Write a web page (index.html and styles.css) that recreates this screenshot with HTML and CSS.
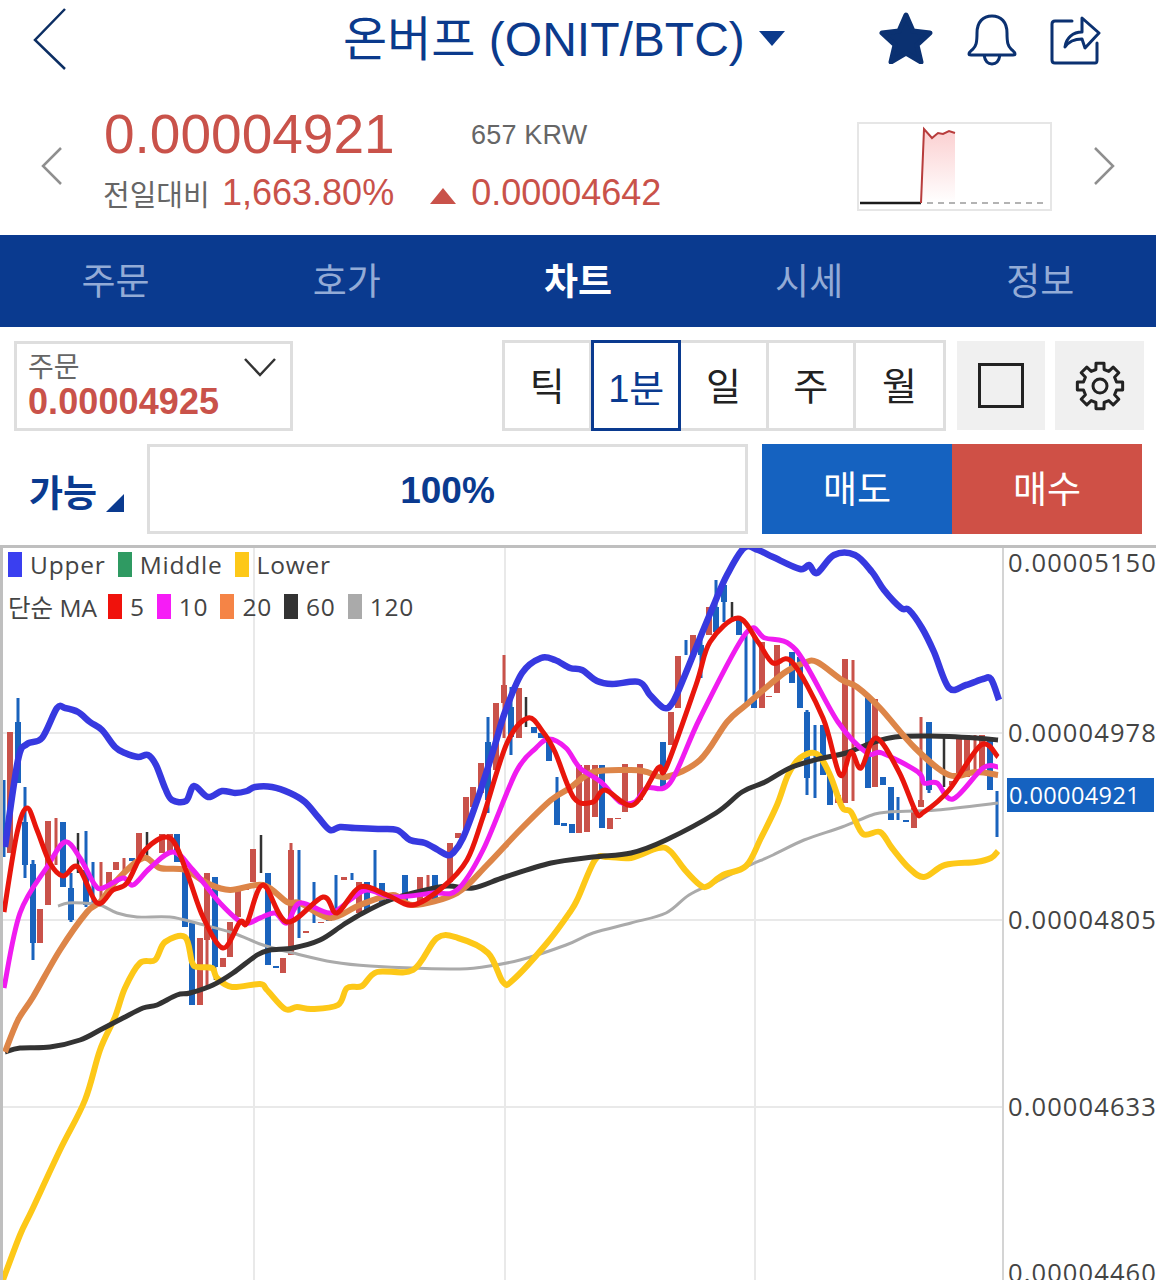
FILE: index.html
```html
<!DOCTYPE html>
<html lang="ko">
<head>
    <meta charset="UTF-8">
    <meta name="viewport" content="width=device-width, initial-scale=1.0">
    <title>온버프 (ONIT/BTC)</title>
    <link rel="stylesheet" href="styles.css">
</head>
<body>
    <header class="topbar">
        <svg class="back" viewBox="0 0 36 64"><path d="M33 2 3 33l30 29"/></svg>
        <div class="title">온버프 (ONIT/BTC)<span class="title-caret"></span></div>
        <div class="top-icons">
            <svg class="icon-star" viewBox="0 0 54 52"><path d="M27 3l7 16 17 2-13 12 4 17-15-9-15 9 4-17L3 21l17-2z"/></svg>
            <svg class="icon-bell" viewBox="0 0 50 52"><path d="M2 40c0-2 2-3 4-5 3-3 4-6 4-16C10 8 16 2 25 2s15 6 15 17c0 10 1 13 4 16 2 2 4 3 4 5 0 1-1 1-2 1H4c-1 0-2 0-2-1zM17 41c1 6 4 9 8 9s7-3 8-9"/></svg>
            <svg class="icon-share" viewBox="0 0 52 50"><path d="M23 6H6c-2 0-3 1-3 3v36c0 2 1 3 3 3h40c2 0 2-1 2-3V28"/><path d="M16 32c1-9 8-15 17-15V3l17 15-14 15-3-9c-7 0-13 2-17 8z"/></svg>
        </div>
    </header>

    <section class="price-row">
        <svg class="side-arrow" viewBox="0 0 22 38"><path d="M20 1 2 19l18 18"/></svg>
        <div class="price-info">
            <div class="price-main">
                <span class="price">0.00004921</span>
                <span class="krw">657 KRW</span>
            </div>
            <div class="price-sub">
                <span class="sub-label">전일대비</span>
                <span class="sub-num">1,663.80%</span>
                <span class="up-mark"></span>
                <span class="sub-num">0.00004642</span>
            </div>
        </div>
        <svg class="spark" viewBox="0 0 191 85">
            <defs>
                <linearGradient id="sparkFill" x1="0" y1="0" x2="0" y2="1">
                    <stop offset="0" stop-color="#fbcfd0"/>
                    <stop offset="1" stop-color="#ffffff"/>
                </linearGradient>
            </defs>
            <path d="M62 79 65 5l8 9 6-5 5 1 6-3 6 2v70z" fill="url(#sparkFill)"/>
            <path class="spark-flat" d="M1 79h61"/>
            <path class="spark-up" d="M62 79 65 5l8 9 6-5 5 1 6-3 6 2"/>
            <path class="spark-dash" d="M68 79h118"/>
        </svg>
        <svg class="side-arrow" viewBox="0 0 22 38"><path d="M2 1l18 18L2 37"/></svg>
    </section>

    <nav class="tabs">
        <a class="tab">주문</a>
        <a class="tab">호가</a>
        <a class="tab active">차트</a>
        <a class="tab">시세</a>
        <a class="tab">정보</a>
    </nav>

    <section class="tools">
        <div class="order-select">
            <div class="order-label">주문</div>
            <div class="order-value">0.00004925</div>
            <svg class="order-chevron" viewBox="0 0 32 20"><path d="M1 2l15 16L31 2"/></svg>
        </div>
        <div class="periods">
            <div class="period">틱</div>
            <div class="period selected">1분</div>
            <div class="period">일</div>
            <div class="period">주</div>
            <div class="period last">월</div>
        </div>
        <div class="square-btn"><span class="square-icon"></span></div>
        <div class="square-btn gear-btn">
            <svg class="gear" viewBox="-25 -25 50 50">
                <path d="M-4.1-16.5-4-22.65 4-22.65 4.1-16.5 8.76-14.57 13.19-18.84 18.84-13.19 14.57-8.76 16.5-4.1 22.65-4 22.65 4 16.5 4.1 14.57 8.76 18.84 13.19 13.19 18.84 8.76 14.57 4.1 16.5 4 22.65-4 22.65-4.1 16.5-8.76 14.57-13.19 18.84-18.84 13.19-14.57 8.76-16.5 4.1-22.65 4-22.65-4-16.5-4.1-14.57-8.76-18.84-13.19-13.19-18.84-8.76-14.57z"/>
                <circle r="7"/>
            </svg>
        </div>
    </section>

    <section class="trade">
        <div class="avail">가능<span class="avail-mark"></span></div>
        <div class="percent">100%</div>
        <div class="trade-btn sell">매도</div>
        <div class="trade-btn buy">매수</div>
    </section>

    <section class="chart">
        <svg class="plot" viewBox="0 545 1156 735">
            <path class="grid" d="M254 548V1280M505 548V1280M755 548V1280M3 733H1003M3 920H1003M3 1107H1003"/>
            <path class="axis" d="M1003 548V1280"/>

            <path class="wick-blue" d="M18 698V783M4 780V857M25 787V878M33 860V960M71 873V922M86 831V907M93 862V907M299 850V938M314 882V923M336 875V918M352 873V880M375 850V892M488 717V813M511 687V755M557 777V825M686 640V655M701 638V678M716 580V632M724 585V622M746 633V707M754 635V695M807 710V795M815 725V798M898 797V820M929 722V793M944 738V738M997 791V837"/>
            <path class="wick-red" d="M56 818V865M101 862V907M124 858V872M207 873V987M291 843V955M428 875V903M504 655V738M853 660V801M921 717V807M975 735V772"/>
            <path class="wick-black" d="M78 833V873M147 832V858M215 940V980M261 835V873M526 697V727M732 602V618M944 738V787"/>
            <path class="body-blue" d="M18 722V783M25 822V865M33 864V943M63 822V887M71 888V920M86 870V905M132 858V861M177 834V862M185 870V927M192 923V1005M215 877V967M268 873V965M276 966V968M329 919V921M367 882V912M382 883V905M405 875V905M435 875V902M488 742V800M511 707V737M534 727V733M541 733V738M549 742V761M557 795V825M564 823V826M572 824V833M602 765V828M663 742V788M701 645V655M716 607V632M724 585V602M739 618V635M754 699V708M792 652V683M800 657V708M807 712V778M823 725V775M830 775V805M868 695V788M883 777V785M891 787V820M906 820V822M929 722V790M990 737V790"/>
            <path class="body-red" d="M10 732V853M40 909V943M48 821V905M109 872V893M116 862V870M139 833V860M162 834V853M170 834V853M200 938V1005M207 873V940M223 958V967M230 922V957M238 890V917M246 887V890M253 849V882M283 958V973M291 850V955M306 931V933M321 922V923M344 877V880M359 882V913M420 877V903M450 843V882M458 833V838M466 797V830M473 787V807M481 763V793M496 703V770M504 685V703M519 688V738M579 765V833M587 765V832M595 765V817M610 818V829M618 818V819M625 764V812M640 764V800M671 712V745M678 656V708M693 635V655M709 607V635M762 642V708M769 696V697M777 645V693M838 795V803M845 659V803M875 699V787M914 808V828M921 800V807M952 781V785M959 735V777M967 735V777M982 735V772"/>

            <polyline class="line-gray" points="58,906 68,903 83,903 100,905 117,913 137,917 170,917 200,924 233,933 263,945 293,953 333,962 370,966 450,969 483,967 520,960 566,945 593,933 631,923 666,913 689,895 716,882 746,867 773,855 804,840 842,827 872,815 888,812 937,810 998,803"/>
            <polyline class="line-upper" points="5,847 18,760 27,744 42,738 57,708 65,708 78,712 90,722 102,730 115,747 125,753 138,757 148,755 156,765 165,788 172,800 186,801 194,786 208,797 222,791 235,793 247,791 255,787 272,787 290,793 305,802 318,817 330,830 340,827 355,828 378,829 397,830 410,840 425,843 438,850 447,855 453,853 463,838 478,798 494,748 505,712 522,673 541,658 555,660 570,668 582,670 597,681 612,684 639,682 650,695 664,708 673,702 685,675 700,638 715,602 727,575 744,548 758,550 773,557 800,569 809,565 817,573 834,555 855,555 872,572 884,590 901,608 909,610 922,628 934,652 949,688 966,685 983,679 991,679 999,700"/>
            <polyline class="line-lower" points="3,1280 20,1235 32,1210 60,1150 85,1100 100,1050 115,1017 125,988 140,963 155,960 165,942 185,937 192,962 197,967 212,968 217,978 232,987 260,984 267,990 285,1009 297,1007 312,1009 338,1005 347,988 362,986 377,972 413,970 437,938 458,938 488,953 503,982 513,980 547,943 570,912 578,898 595,860 608,857 631,858 658,848 670,851 685,870 700,885 708,886 723,875 746,866 761,838 777,805 788,775 800,758 817,754 830,775 842,807 851,812 863,834 880,832 892,848 909,868 924,877 945,865 976,862 991,858 998,851"/>
            <polyline class="line-black" points="5,1052 20,1048 50,1047 80,1040 100,1030 123,1018 143,1008 157,1005 177,995 190,993 213,985 233,973 257,955 270,950 293,948 320,940 343,925 363,913 390,900 417,892 447,886 473,888 505,877 551,863 593,857 631,853 666,840 716,813 742,792 765,782 792,767 823,758 846,753 872,743 895,737 930,736 976,738 998,740"/>
            <polyline class="line-orange" points="5,1052 18,1020 33,997 60,950 87,912 100,902 117,880 143,858 160,868 185,870 207,883 230,890 263,885 287,902 300,903 330,918 360,905 393,895 413,905 457,893 487,865 520,830 551,800 570,788 593,772 631,770 647,772 666,777 700,760 727,722 746,705 784,673 804,663 817,662 842,680 857,687 880,708 915,748 949,775 976,772 998,775"/>
            <polyline class="line-magenta" points="4,988 20,913 47,867 65,842 80,858 95,885 103,888 123,878 133,885 150,868 173,852 193,870 220,903 243,923 260,918 275,913 287,923 300,903 330,913 350,900 367,890 393,897 433,893 457,890 483,850 516,772 536,748 549,739 566,748 580,768 601,782 620,802 635,802 647,788 670,783 700,718 746,633 765,638 796,650 838,722 867,753 882,753 918,772 924,783 937,783 953,799 983,768 998,767"/>
            <polyline class="line-red" points="4,912 17,833 27,808 37,830 50,863 63,876 78,867 97,903 113,890 127,883 145,850 170,838 187,873 203,917 223,948 240,922 247,923 263,885 287,922 323,897 337,913 360,887 387,895 413,905 443,887 467,860 483,817 507,743 528,718 543,732 555,752 574,798 593,802 605,790 633,805 658,768 666,768 696,685 710,642 738,618 758,642 773,663 792,662 823,718 840,775 851,752 861,768 876,738 899,772 916,812 924,812 949,790 981,745 998,757"/>
        </svg>

        <div class="legend">
            <div class="legend-row">
                <span class="swatch c-upper"></span><span class="legend-text">Upper</span>
                <span class="swatch c-middle"></span><span class="legend-text">Middle</span>
                <span class="swatch c-lower"></span><span class="legend-text">Lower</span>
            </div>
            <div class="legend-row">
                <span class="legend-text ma-label">단순 MA</span>
                <span class="swatch c-red"></span><span class="legend-text">5</span>
                <span class="swatch c-magenta"></span><span class="legend-text">10</span>
                <span class="swatch c-orange"></span><span class="legend-text">20</span>
                <span class="swatch c-black"></span><span class="legend-text">60</span>
                <span class="swatch c-gray"></span><span class="legend-text">120</span>
            </div>
        </div>

        <div class="y-label y1">0.00005150</div>
        <div class="y-label y2">0.00004978</div>
        <div class="y-label y3">0.00004805</div>
        <div class="y-label y4">0.00004633</div>
        <div class="y-label y5">0.00004460</div>
        <div class="y-label y-now">0.00004921</div>
    </section>

    <script src="chart.js"></script>
</body>
</html>
```

FILE: styles.css
```css
html, body {
    margin: 0;
    padding: 0;
    background: #fff;
}

body {
    width: 1156px;
    height: 1280px;
    overflow: hidden;
    font-family: "Liberation Sans", "Noto Sans CJK KR", sans-serif;
    color: #222;
}

/* top bar */
.topbar {
    height: 80px;
    display: flex;
    align-items: center;
    position: relative;
}

.back {
    width: 36px;
    height: 64px;
    margin: -2px 0 0 32px;
    fill: none;
    stroke: #0c2e63;
    stroke-width: 2.5;
}

.title {
    width: 470px;
    margin-left: 275px;
    font-size: 48px;
    line-height: 80px;
    color: #0b3a8c;
    white-space: nowrap;
}

.title-caret {
    display: inline-block;
    width: 0;
    height: 0;
    margin: 0 0 10px 14px;
    border-left: 13px solid transparent;
    border-right: 13px solid transparent;
    border-top: 15px solid #0b3a8c;
}

.top-icons {
    display: flex;
    align-items: center;
    margin-left: 66px;
}

.top-icons svg {
    fill: none;
    stroke: #0b3171;
    stroke-width: 3;
    stroke-linejoin: round;
    stroke-linecap: round;
}

.icon-star {
    width: 54px;
    height: 52px;
    margin-top: -4px;
}

.top-icons .icon-star {
    fill: #0b3171;
    stroke-width: 5;
}

.icon-bell {
    width: 50px;
    height: 52px;
    margin: 0 0 0 34px;
}

.icon-share {
    width: 52px;
    height: 50px;
    margin: 0 0 0 32px;
}

/* price */
.price-row {
    height: 155px;
    display: flex;
    align-items: flex-start;
    position: relative;
}

.side-arrow {
    width: 22px;
    height: 38px;
    margin: 67px 0 0 41px;
    fill: none;
    stroke: #8f8f8f;
    stroke-width: 2.5;
}

.side-arrow:last-child {
    margin-left: 41px;
}

.price-info {
    width: 753px;
    margin-left: 41px;
}

.price-main {
    display: flex;
    align-items: baseline;
    height: 72px;
    padding-top: 22px;
    box-sizing: border-box;
}

.price {
    font-size: 55px;
    line-height: 64px;
    color: #c9524a;
    width: 367px;
}

.krw {
    font-size: 27px;
    letter-spacing: 0.2px;
    color: #666;
    position: relative;
    top: -9px;
}

.price-sub {
    display: flex;
    align-items: center;
    height: 42px;
    margin-top: 20px;
}

.sub-label {
    font-size: 29px;
    color: #666;
    width: 118px;
    margin-left: -1px;
    margin-right: 1px;
}

.sub-num {
    font-size: 36px;
    color: #c9524a;
}

.up-mark {
    width: 0;
    height: 0;
    margin: 6px 15px 0 36px;
    border-left: 13px solid transparent;
    border-right: 13px solid transparent;
    border-bottom: 16px solid #c9524a;
}

.spark {
    width: 195px;
    height: 89px;
    margin-top: 42px;
    border: 2px solid #e6e6e6;
    box-sizing: border-box;
    flex: none;
}

.spark-flat {
    fill: none;
    stroke: #1b1b1b;
    stroke-width: 2.5;
}

.spark-up {
    fill: none;
    stroke: #b83c3c;
    stroke-width: 2;
}

.spark-dash {
    fill: none;
    stroke: #9a9a9a;
    stroke-width: 1.5;
    stroke-dasharray: 6 5;
}

/* tabs */
.tabs {
    height: 92px;
    display: flex;
    background: #0a3a8f;
}

.tab {
    width: 231.2px;
    line-height: 96px;
    text-align: center;
    font-size: 37px;
    color: #93abd6;
}

.tab.active {
    color: #fff;
    font-weight: bold;
}

/* tool row */
.tools {
    display: flex;
    align-items: flex-start;
    height: 117px;
    padding: 13px 0 0 14px;
    box-sizing: border-box;
}

.order-select {
    width: 279px;
    height: 90px;
    margin-top: 1px;
    border: 3px solid #dedede;
    box-sizing: border-box;
    padding: 7px 0 0 11px;
    position: relative;
}

.order-label {
    font-size: 28px;
    line-height: 34px;
    color: #666;
}

.order-value {
    font-size: 36px;
    line-height: 34px;
    font-weight: bold;
    color: #c9524a;
    letter-spacing: 0.1px;
}

.order-chevron {
    position: absolute;
    top: 13px;
    right: 14px;
    width: 32px;
    height: 20px;
    fill: none;
    stroke: #333;
    stroke-width: 2.5;
}

.periods {
    display: flex;
    margin-left: 209px;
    height: 91px;
    border: 3px solid #dedede;
    box-sizing: border-box;
    width: 444px;
}

.period {
    width: 87.5px;
    line-height: 88px;
    text-align: center;
    font-size: 38px;
    color: #222;
    border-right: 3px solid #dedede;
    box-sizing: border-box;
}

.period.last {
    border-right: 0;
}

.period.selected {
    width: 90px;
    height: 91px;
    margin: -3px 0 -3px -1px;
    line-height: 92px;
    border: 3px solid #0a3a8f;
    color: #0a3a8f;
    flex: none;
    position: relative;
}

.square-btn {
    width: 88px;
    height: 89px;
    margin: 1px 0 0 11px;
    background: #f0f0f0;
    display: flex;
    align-items: center;
    justify-content: center;
}

.gear-btn {
    margin-left: 10px;
    width: 89px;
}

.square-icon {
    width: 46px;
    height: 45px;
    border: 3px solid #222;
    box-sizing: border-box;
}

.gear {
    width: 50px;
    height: 50px;
    fill: none;
    stroke: #222;
    stroke-width: 3;
    stroke-linejoin: round;
}

/* trade row */
.trade {
    display: flex;
    height: 101px;
    align-items: flex-start;
}

.avail {
    width: 147px;
    height: 90px;
    padding-left: 29px;
    box-sizing: border-box;
    font-size: 37px;
    line-height: 102px;
    font-weight: bold;
    color: #0a3a8f;
    position: relative;
}

.avail-mark {
    position: absolute;
    left: 106px;
    top: 50px;
    width: 0;
    height: 0;
    border-left: 18px solid transparent;
    border-bottom: 18px solid #0a3a8f;
}

.percent {
    width: 601px;
    height: 90px;
    border: 3px solid #dedede;
    box-sizing: border-box;
    text-align: center;
    font-size: 37px;
    line-height: 87px;
    font-weight: bold;
    color: #0a3a8f;
    margin-right: 14px;
}

.trade-btn {
    width: 190px;
    height: 90px;
    text-align: center;
    font-size: 37px;
    line-height: 93px;
    color: #fff;
}

.sell {
    background: #1562c0;
}

.buy {
    background: #cf5046;
}

/* chart */
.chart {
    position: relative;
    height: 735px;
    border-top: 3px solid #bfbfbf;
    box-sizing: border-box;
    overflow: hidden;
}

.plot {
    position: absolute;
    left: 0;
    top: -3px;
    width: 1156px;
    height: 735px;
}

.chart::before {
    content: "";
    position: absolute;
    left: 0;
    top: 0;
    bottom: 0;
    width: 3px;
    background: #bfbfbf;
    z-index: 1;
}

.plot path, .plot polyline {
    fill: none;
}

.grid {
    stroke: #e9e9e9;
    stroke-width: 2;
}

.axis {
    stroke: #d4d4d4;
    stroke-width: 2;
}

.wick-blue { stroke: #1a63bd; stroke-width: 3; }
.wick-red { stroke: #c9524a; stroke-width: 3; }
.wick-black { stroke: #333; stroke-width: 2.5; }
.body-blue { stroke: #1a63bd; stroke-width: 6; }
.body-red { stroke: #c9524a; stroke-width: 6; }

.line-upper { stroke: #3739e0; stroke-width: 6.5; stroke-linejoin: round; }
.line-lower { stroke: #fdc818; stroke-width: 6; stroke-linejoin: round; }
.line-black { stroke: #333; stroke-width: 5; stroke-linejoin: round; }
.line-gray { stroke: #aaa; stroke-width: 3; stroke-linejoin: round; }
.line-orange { stroke: #dd8548; stroke-width: 6; stroke-linejoin: round; }
.line-magenta { stroke: #f01cf0; stroke-width: 5; stroke-linejoin: round; }
.line-red { stroke: #e8160c; stroke-width: 5; stroke-linejoin: round; }

.legend {
    position: absolute;
    left: 8px;
    top: 3px;
    font-family: "Open Sans", "Noto Sans CJK KR", sans-serif;
    font-size: 24.5px;
    color: #444;
}

.legend-row {
    display: flex;
    align-items: center;
    height: 26px;
    margin-bottom: 16px;
    white-space: nowrap;
}

.swatch {
    width: 14px;
    height: 25px;
    flex: none;
    margin-right: 8px;
}

.legend-text {
    margin-right: 12px;
    letter-spacing: 0.8px;
}

.ma-label {
    margin-right: 11px;
    letter-spacing: 0;
}

.c-upper { background: #3a3ff0; }
.c-middle { background: #2f9a62; }
.c-lower { background: #fdc818; }
.c-red { background: #f0120c; }
.c-magenta { background: #f61cf6; }
.c-orange { background: #f58446; }
.c-black { background: #333; }
.c-gray { background: #aaa; }

.y-label {
    position: absolute;
    left: 1008px;
    width: 160px;
    height: 34px;
    line-height: 34px;
    font-family: "Open Sans", sans-serif;
    font-size: 25.5px;
    letter-spacing: 1.1px;
    color: #444;
    white-space: nowrap;
}

.y1 { top: -3px; }
.y2 { top: 167px; }
.y3 { top: 354px; }
.y4 { top: 541px; }
.y5 { top: 707px; }

.y-now {
    top: 230px;
    left: 1007px;
    width: 145px;
    padding-left: 2px;
    background: #1562c0;
    color: #fff;
    font-size: 23.5px;
    letter-spacing: 0.4px;
    overflow: hidden;
}
```

FILE: chart.js
```js
// turn the indicator polylines into smooth curves
document.querySelectorAll('.plot polyline').forEach(function (line) {
    const pts = line.getAttribute('points').trim().split(' ').map(function (p) {
        return p.split(',').map(Number);
    });
    let d = 'M' + pts[0].join(' ');
    for (let i = 0; i < pts.length - 1; i++) {
        const p0 = pts[i - 1] || pts[i];
        const p1 = pts[i];
        const p2 = pts[i + 1];
        const p3 = pts[i + 2] || p2;
        const c1x = p1[0] + (p2[0] - p0[0]) / 6;
        const c1y = p1[1] + (p2[1] - p0[1]) / 6;
        const c2x = p2[0] - (p3[0] - p1[0]) / 6;
        const c2y = p2[1] - (p3[1] - p1[1]) / 6;
        d += ' C' + c1x + ' ' + c1y + ' ' + c2x + ' ' + c2y + ' ' + p2[0] + ' ' + p2[1];
    }
    const path = document.createElementNS('http://www.w3.org/2000/svg', 'path');
    path.setAttribute('class', line.getAttribute('class'));
    path.setAttribute('d', d);
    line.replaceWith(path);
});
```
